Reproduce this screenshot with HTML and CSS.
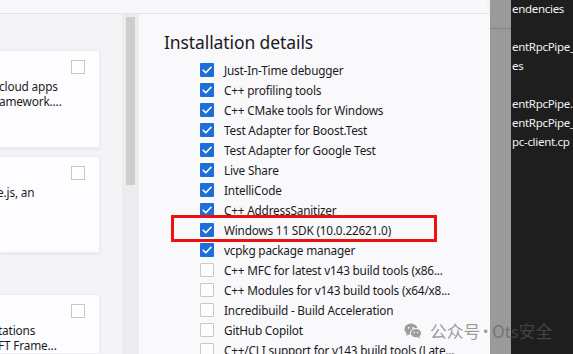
FILE: index.html
```html
<!DOCTYPE html>
<html>
<head>
<meta charset="utf-8">
<link rel="stylesheet" href="styles.css">
</head>
<body>
<div class="app">
  <div class="installer">
    <div class="topstrip"></div>
    <div class="content">
      <div class="workloads">
        <div class="card card1">
          <span class="cb"></span>
          <div class="desc">
            <div class="line">cloud apps</div>
            <div class="line">amework....</div>
          </div>
        </div>
        <div class="card card2">
          <span class="cb"></span>
          <div class="desc">
            <div class="line">e.js, an</div>
          </div>
        </div>
        <div class="card card3">
          <span class="cb"></span>
          <div class="desc">
            <div class="line">tations</div>
            <div class="line">FT Frame...</div>
          </div>
        </div>
      </div>
      <div class="scrollbar"><div class="thumb"></div></div>
      <div class="details">
        <h2 class="title">Installation details</h2>
        <ul class="opts">
          <li><span class="box on"></span>Just-In-Time debugger</li>
          <li><span class="box on"></span>C++ profiling tools</li>
          <li><span class="box on"></span>C++ CMake tools for Windows</li>
          <li><span class="box on"></span>Test Adapter for Boost.Test</li>
          <li><span class="box on"></span>Test Adapter for Google Test</li>
          <li><span class="box on"></span>Live Share</li>
          <li><span class="box on"></span>IntelliCode</li>
          <li><span class="box on"></span>C++ AddressSanitizer</li>
          <li><span class="box on"></span>Windows 11 SDK (10.0.22621.0)</li>
          <li><span class="box on"></span>vcpkg package manager</li>
          <li><span class="box"></span>C++ MFC for latest v143 build tools (x86...</li>
          <li><span class="box"></span>C++ Modules for v143 build tools (x64/x8...</li>
          <li><span class="box"></span>Incredibuild - Build Acceleration</li>
          <li><span class="box"></span>GitHub Copilot</li>
          <li><span class="box"></span>C++/CLI support for v143 build tools (Late...</li>
        </ul>
        <div class="highlight"></div>
      </div>
    </div>
  </div>
  <div class="graybar"><div class="graytop"></div></div>
  <div class="solution">
    <div class="row">endencies</div>
    <div class="row"></div>
    <div class="row">entRpcPipe_</div>
    <div class="row">es</div>
    <div class="row"></div>
    <div class="row">entRpcPipe.</div>
    <div class="row">entRpcPipe_</div>
    <div class="row">pc-client.cp</div>
  </div>
  <div class="watermark">
    <svg class="wx" width="18" height="16" viewBox="0 0 18 16">
      <ellipse cx="7" cy="6.2" rx="6.6" ry="5.6" fill="currentColor"/>
      <path d="M2.6 10.2 L1.8 13 L5 11.2 Z" fill="currentColor"/>
      <ellipse cx="12" cy="10.2" rx="5.6" ry="4.7" fill="currentColor" stroke="#fff" stroke-width="1"/>
      <path d="M15.4 13.6 L16.4 15.6 L13.6 14.4 Z" fill="currentColor"/>
      <circle cx="4.8" cy="4.8" r="0.9" fill="#fff"/>
      <circle cx="9" cy="4.8" r="0.9" fill="#fff"/>
      <circle cx="10.2" cy="9.4" r="0.75" fill="#fff"/>
      <circle cx="13.8" cy="9.4" r="0.75" fill="#fff"/>
    </svg>
    <span class="wtext">公众号<span class="dot">·</span>Ots安全</span>
  </div>
</div>
</body>
</html>
```
FILE: styles.css
```css
* { box-sizing: border-box; }
html, body { margin: 0; padding: 0; }
body {
  width: 573px;
  height: 354px;
  overflow: hidden;
  font-family: "Noto Sans", "Open Sans", sans-serif;
  background: #f4f3f6;
}
.app {
  position: relative;
  display: flex;
  width: 573px;
  height: 354px;
  overflow: hidden;
}
.installer {
  width: 490px;
  display: flex;
  flex-direction: column;
  background: #f4f3f6;
}
.topstrip {
  height: 14px;
  flex: none;
  background: #f8f7fa;
  border-bottom: 1px solid #e4e3e6;
  margin-right: 3px;
}
.content {
  flex: 1;
  display: flex;
  min-height: 0;
}
.workloads {
  width: 122px;
  flex: none;
  padding-top: 36px;
  display: flex;
  flex-direction: column;
  overflow: hidden;
}
.card {
  position: relative;
  width: 100px;
  background: #fdfcfe;
  box-shadow: 0 1px 3px rgba(0,0,0,0.08);
  border: 1px solid #eeedf0;
  border-left: none;
  padding: 9px 0 0 0;
  display: flex;
  flex-direction: column;
}
.card1 { height: 100px; }
.card2 { height: 100px; margin-top: 8px; }
.card3 { height: 60px; margin-top: 41px; }
.cb {
  align-self: flex-end;
  width: 14px;
  height: 14px;
  margin-right: 14px;
  border: 1px solid #c8c8cc;
  background: #fff;
}
.desc {
  margin-top: 5px;
  margin-left: -1px;
  font-size: 11.8px;
  letter-spacing: -0.15px;
  line-height: 15px;
  color: #1c1c1c;
  white-space: nowrap;
}
.card2 .desc { margin-left: -3px; }
.card3 .desc { margin-left: -2px; }
.scrollbar {
  width: 18px;
  flex: none;
  background: #ececee;
  border-right: 1px solid #f8f7fa;
  padding: 3px 4px 0 4px;
}
.thumb {
  width: 9px;
  height: 168px;
  background: #cdcdcd;
}
.details {
  position: relative;
  flex: 1;
  background: #f9f8fb;
  padding: 15px 0 0 24px;
}
.title {
  margin: 0;
  font-size: 17.5px;
  font-weight: 400;
  line-height: 26px;
  letter-spacing: -0.1px;
  color: #1b1b1b;
}
.opts {
  list-style: none;
  margin: 5px 0 0 36px;
  padding: 0;
}
.opts li {
  display: flex;
  align-items: center;
  height: 20px;
  font-size: 11.8px;
  letter-spacing: -0.2px;
  color: #1b1b1b;
  white-space: nowrap;
}
.box {
  width: 14px;
  height: 14px;
  flex: none;
  margin-right: 10px;
  border: 1px solid #c9c9cc;
  background: #fdfdfd;
  border-radius: 1px;
}
.box.on {
  border: none;
  background: #1c6fd6 url("data:image/svg+xml;utf8,<svg xmlns='http://www.w3.org/2000/svg' width='14' height='14' viewBox='0 0 14 14'><path d='M3.2 7.2 L5.8 9.8 L11 4.3' fill='none' stroke='white' stroke-width='1.6' stroke-linecap='round' stroke-linejoin='round'/></svg>") no-repeat center;
}
.highlight {
  position: absolute;
  left: 31px;
  top: 201px;
  width: 266px;
  height: 27px;
  border: 3px solid #ee1111;
}
.graybar {
  width: 21px;
  flex: none;
  background: #9a9a9a;
}
.graytop {
  height: 29px;
  border-bottom: 1px solid #838383;
}
.solution {
  flex: 1;
  background: #1e1e1e;
  color: #f2f2f2;
  font-size: 11.5px;
  letter-spacing: -0.3px;
  padding-top: 0;
  white-space: nowrap;
  overflow: hidden;
}
.row {
  height: 19px;
  line-height: 17px;
  padding-left: 1px;
}
.watermark {
  position: absolute;
  left: 404px;
  top: 320px;
  display: flex;
  align-items: center;
  gap: 8px;
  color: rgba(92,92,92,0.62);
  font-family: "Noto Sans CJK SC", "Noto Sans", sans-serif;
  font-size: 16.8px;
  line-height: 22px;
  white-space: nowrap;
}
.wx { color: #9a9a9a; opacity: 0.95; }
.dot { margin: 0 -2px 0 -3px; }
```
